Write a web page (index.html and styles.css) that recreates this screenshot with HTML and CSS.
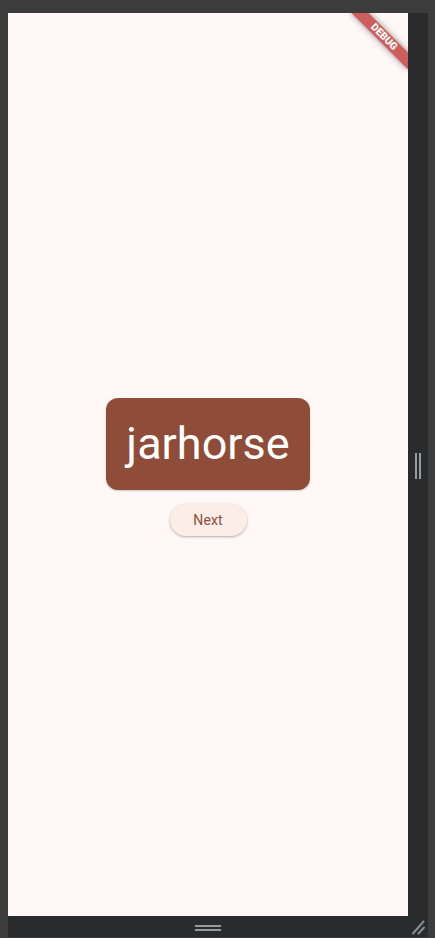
FILE: index.html
```html
<!DOCTYPE html>
<html>
<head>
<meta charset="utf-8">
<link rel="stylesheet" href="styles.css">
</head>
<body>
<div class="device">
  <div class="app">
    <div class="content">
      <div class="word-card">jarhorse</div>
      <button class="next-btn">Next</button>
    </div>
    <div class="debug-banner">DEBUG</div>
  </div>
  <div class="side-handle"><span></span><span></span></div>
  <div class="bottom-handle"><span></span><span></span></div>
  <div class="corner">
    <svg width="20" height="21" viewBox="0 0 20 21"><line x1="5" y1="17.5" x2="15.5" y2="5.5" stroke="#8c8c8c" stroke-width="2" stroke-linecap="round"/><line x1="10.5" y1="17.5" x2="16" y2="11.5" stroke="#8c8c8c" stroke-width="2" stroke-linecap="round"/></svg>
  </div>
</div>
</body>
</html>
```
FILE: styles.css
```css
html, body {
  margin: 0;
  padding: 0;
  background: #3c3c3c;
  width: 435px;
  height: 938px;
  overflow: hidden;
}
body {
  padding: 13px 0 0 8px;
  box-sizing: border-box;
  font-family: Roboto, "Noto Sans", sans-serif;
}
.device {
  width: 420px;
  height: 924px;
  background: #2a2b2d;
  display: grid;
  grid-template-columns: 400px 20px;
  grid-template-rows: 903px 21px;
}
.app {
  position: relative;
  overflow: hidden;
  background: #fff8f6;
  display: flex;
  align-items: center;
  justify-content: center;
  padding-top: 5px;
  box-sizing: border-box;
}
.content {
  display: flex;
  flex-direction: column;
  align-items: center;
}
.word-card {
  background: #8f4c38;
  color: #ffffff;
  font-size: 45px;
  line-height: 52px;
  padding: 20px 20px;
  border-radius: 12px;
  box-shadow: 0 1px 2px rgba(0,0,0,0.2);
}
.next-btn {
  margin-top: 14px;
  width: 77px;
  height: 32px;
  padding: 0;
  border: none;
  border-radius: 16px;
  background: #fdede8;
  color: #8f4c38;
  font-family: Roboto, sans-serif;
  font-size: 14px;
  font-weight: 400;
  letter-spacing: 0.1px;
  box-shadow: 0 1px 2px rgba(0,0,0,0.2), 0 1px 3px 1px rgba(0,0,0,0.08);
}
.debug-banner {
  position: absolute;
  width: 80px;
  height: 12px;
  left: 336px;
  top: 18px;
  transform: rotate(45deg);
  background: rgba(183, 28, 28, 0.7);
  color: #ffffff;
  font-size: 10.2px;
  font-weight: 900;
  line-height: 12px;
  text-align: center;
  box-shadow: 0 0 6px rgba(0,0,0,0.45);
}
.side-handle {
  display: flex;
  align-items: center;
  justify-content: flex-start;
  gap: 2px;
  padding-left: 7px;
  padding-top: 3px;
}
.side-handle span {
  width: 2px;
  height: 26px;
  background: #9a9a9a;
}
.bottom-handle {
  display: flex;
  flex-direction: column;
  align-items: center;
  justify-content: flex-start;
  gap: 2px;
  padding-top: 9px;
}
.bottom-handle span {
  width: 26px;
  height: 2px;
  background: #9a9a9a;
}
.corner {
  display: flex;
}
```
